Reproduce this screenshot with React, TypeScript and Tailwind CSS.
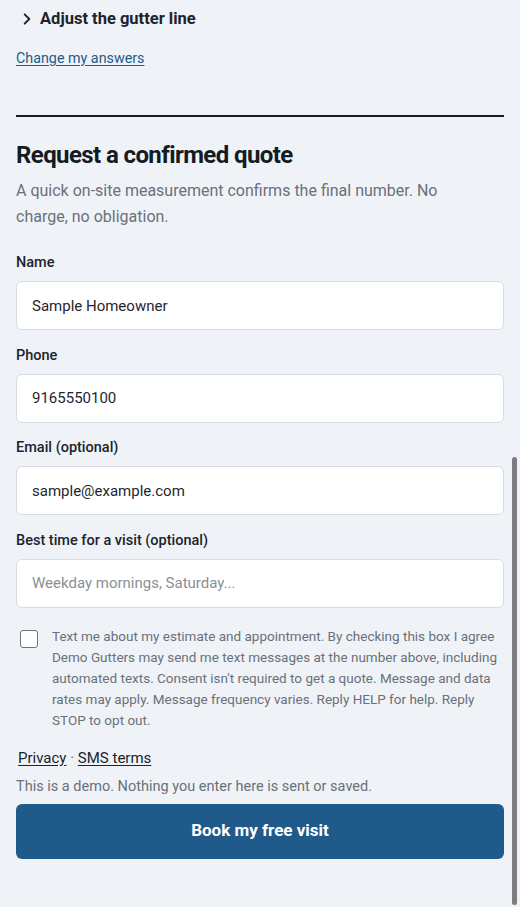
// quote request page - confirmed quote form

import { useState } from 'react'

function Field({
  label,
  value,
  placeholder,
  onChange,
}: {
  label: string
  value: string
  placeholder?: string
  onChange: (v: string) => void
}) {
  return (
    <label className="flex flex-col">
      <span className="text-[14.5px] font-medium text-[#1b232d] leading-[20px]">{label}</span>
      <input
        value={value}
        placeholder={placeholder}
        onChange={(e) => onChange(e.target.value)}
        className="mt-[8px] h-[49px] w-full rounded-[6px] border border-[#d7dce2] bg-white px-[15px] text-[15px]
                 text-[#1f2630] placeholder:text-[#8a8f96] outline-none"
      />
    </label>
  )
}

export default function App() {
  const [name, setName] = useState('Sample Homeowner')
  const [phone, setPhone] = useState('9165550100')
  const [email, setEmail] = useState('sample@example.com')
  const [bestTime, setBestTime] = useState('')
  const [smsOk, setSmsOk] = useState(false)

  return (
    <div
      className="min-h-screen bg-[#eff3f8] px-4 pb-12"
      style={{ fontFamily: 'Roboto, "Noto Sans", sans-serif' }}
    >
      <div className="flex items-center gap-[6px] pt-[8px] h-[30px]">
        <svg className="w-[14px] h-[14px] ml-[4px] text-[#1b232d]" viewBox="0 0 24 24" fill="none" stroke="currentColor" strokeWidth={3.2} strokeLinecap="round" strokeLinejoin="round">
          <path d="M8 4l8 8-8 8" />
        </svg>
        <span className="text-[16.5px] font-bold text-[#1b232d]">Adjust the gutter line</span>
      </div>

      <a href="#" className="block mt-[18px] text-[14.3px] text-[#235b8a] underline underline-offset-2 leading-[20px]">
        Change my answers
      </a>

      <div className="mt-[47px] h-[2px] bg-[#141c26]" />

      <h1 className="mt-[23px] text-[24px] font-bold tracking-[-0.6px] text-[#131b25] leading-[30px]">
        Request a confirmed quote
      </h1>
      <p className="mt-[8px] max-w-[450px] text-[16px] text-[#6b7079] leading-[26px]">
        A quick on-site measurement confirms the final number. No charge, no obligation.
      </p>

      <div className="mt-[23px] flex flex-col gap-[15.5px]">
        <Field label="Name" value={name} onChange={setName} />
        <Field label="Phone" value={phone} onChange={setPhone} />
        <Field label="Email (optional)" value={email} onChange={setEmail} />
        <Field
          label="Best time for a visit (optional)"
          value={bestTime}
          placeholder="Weekday mornings, Saturday..."
          onChange={setBestTime}
        />
      </div>

      <label className="mt-[18px] flex gap-[14px] pl-[4px]">
        <input
          type="checkbox"
          checked={smsOk}
          onChange={(e) => setSmsOk(e.target.checked)}
          className="mt-[4px] h-[18px] w-[18px] shrink-0 appearance-none rounded-[3px] border border-[#6f747b] bg-white checked:bg-[#235b8a]"
        />
        <span className="text-[13.5px] text-[#6b7079] leading-[21px]">
          Text me about my estimate and appointment. By checking this box I agree Demo Gutters may send me text
          messages at the number above, including automated texts. Consent isn't required to get a quote. Message
          and data rates may apply. Message frequency varies. Reply HELP for help. Reply STOP to opt out.
        </span>
      </label>

      <div className="mt-[17px] pl-[2px] text-[15px] text-[#1b232d] leading-[20px]">
        <a href="#" className="underline underline-offset-2">Privacy</a>
        <span className="text-[#6b7079]"> · </span>
        <a href="#" className="underline underline-offset-2">SMS terms</a>
      </div>
      <p className="mt-[9px] text-[14.5px] text-[#6b7079] leading-[20px]">
        This is a demo. Nothing you enter here is sent or saved.
      </p>

      <button className="mt-[7px] h-[55px] w-full rounded-[6px] bg-[#205a8a] text-[17px] font-bold text-white">
        Book my free visit
      </button>

      {/* overlay scrollbar thumb */}
      <div className="fixed right-[3px] top-[457px] h-[448px] w-[5px] rounded-full bg-[#7b7d80]" />
    </div>
  )
}
